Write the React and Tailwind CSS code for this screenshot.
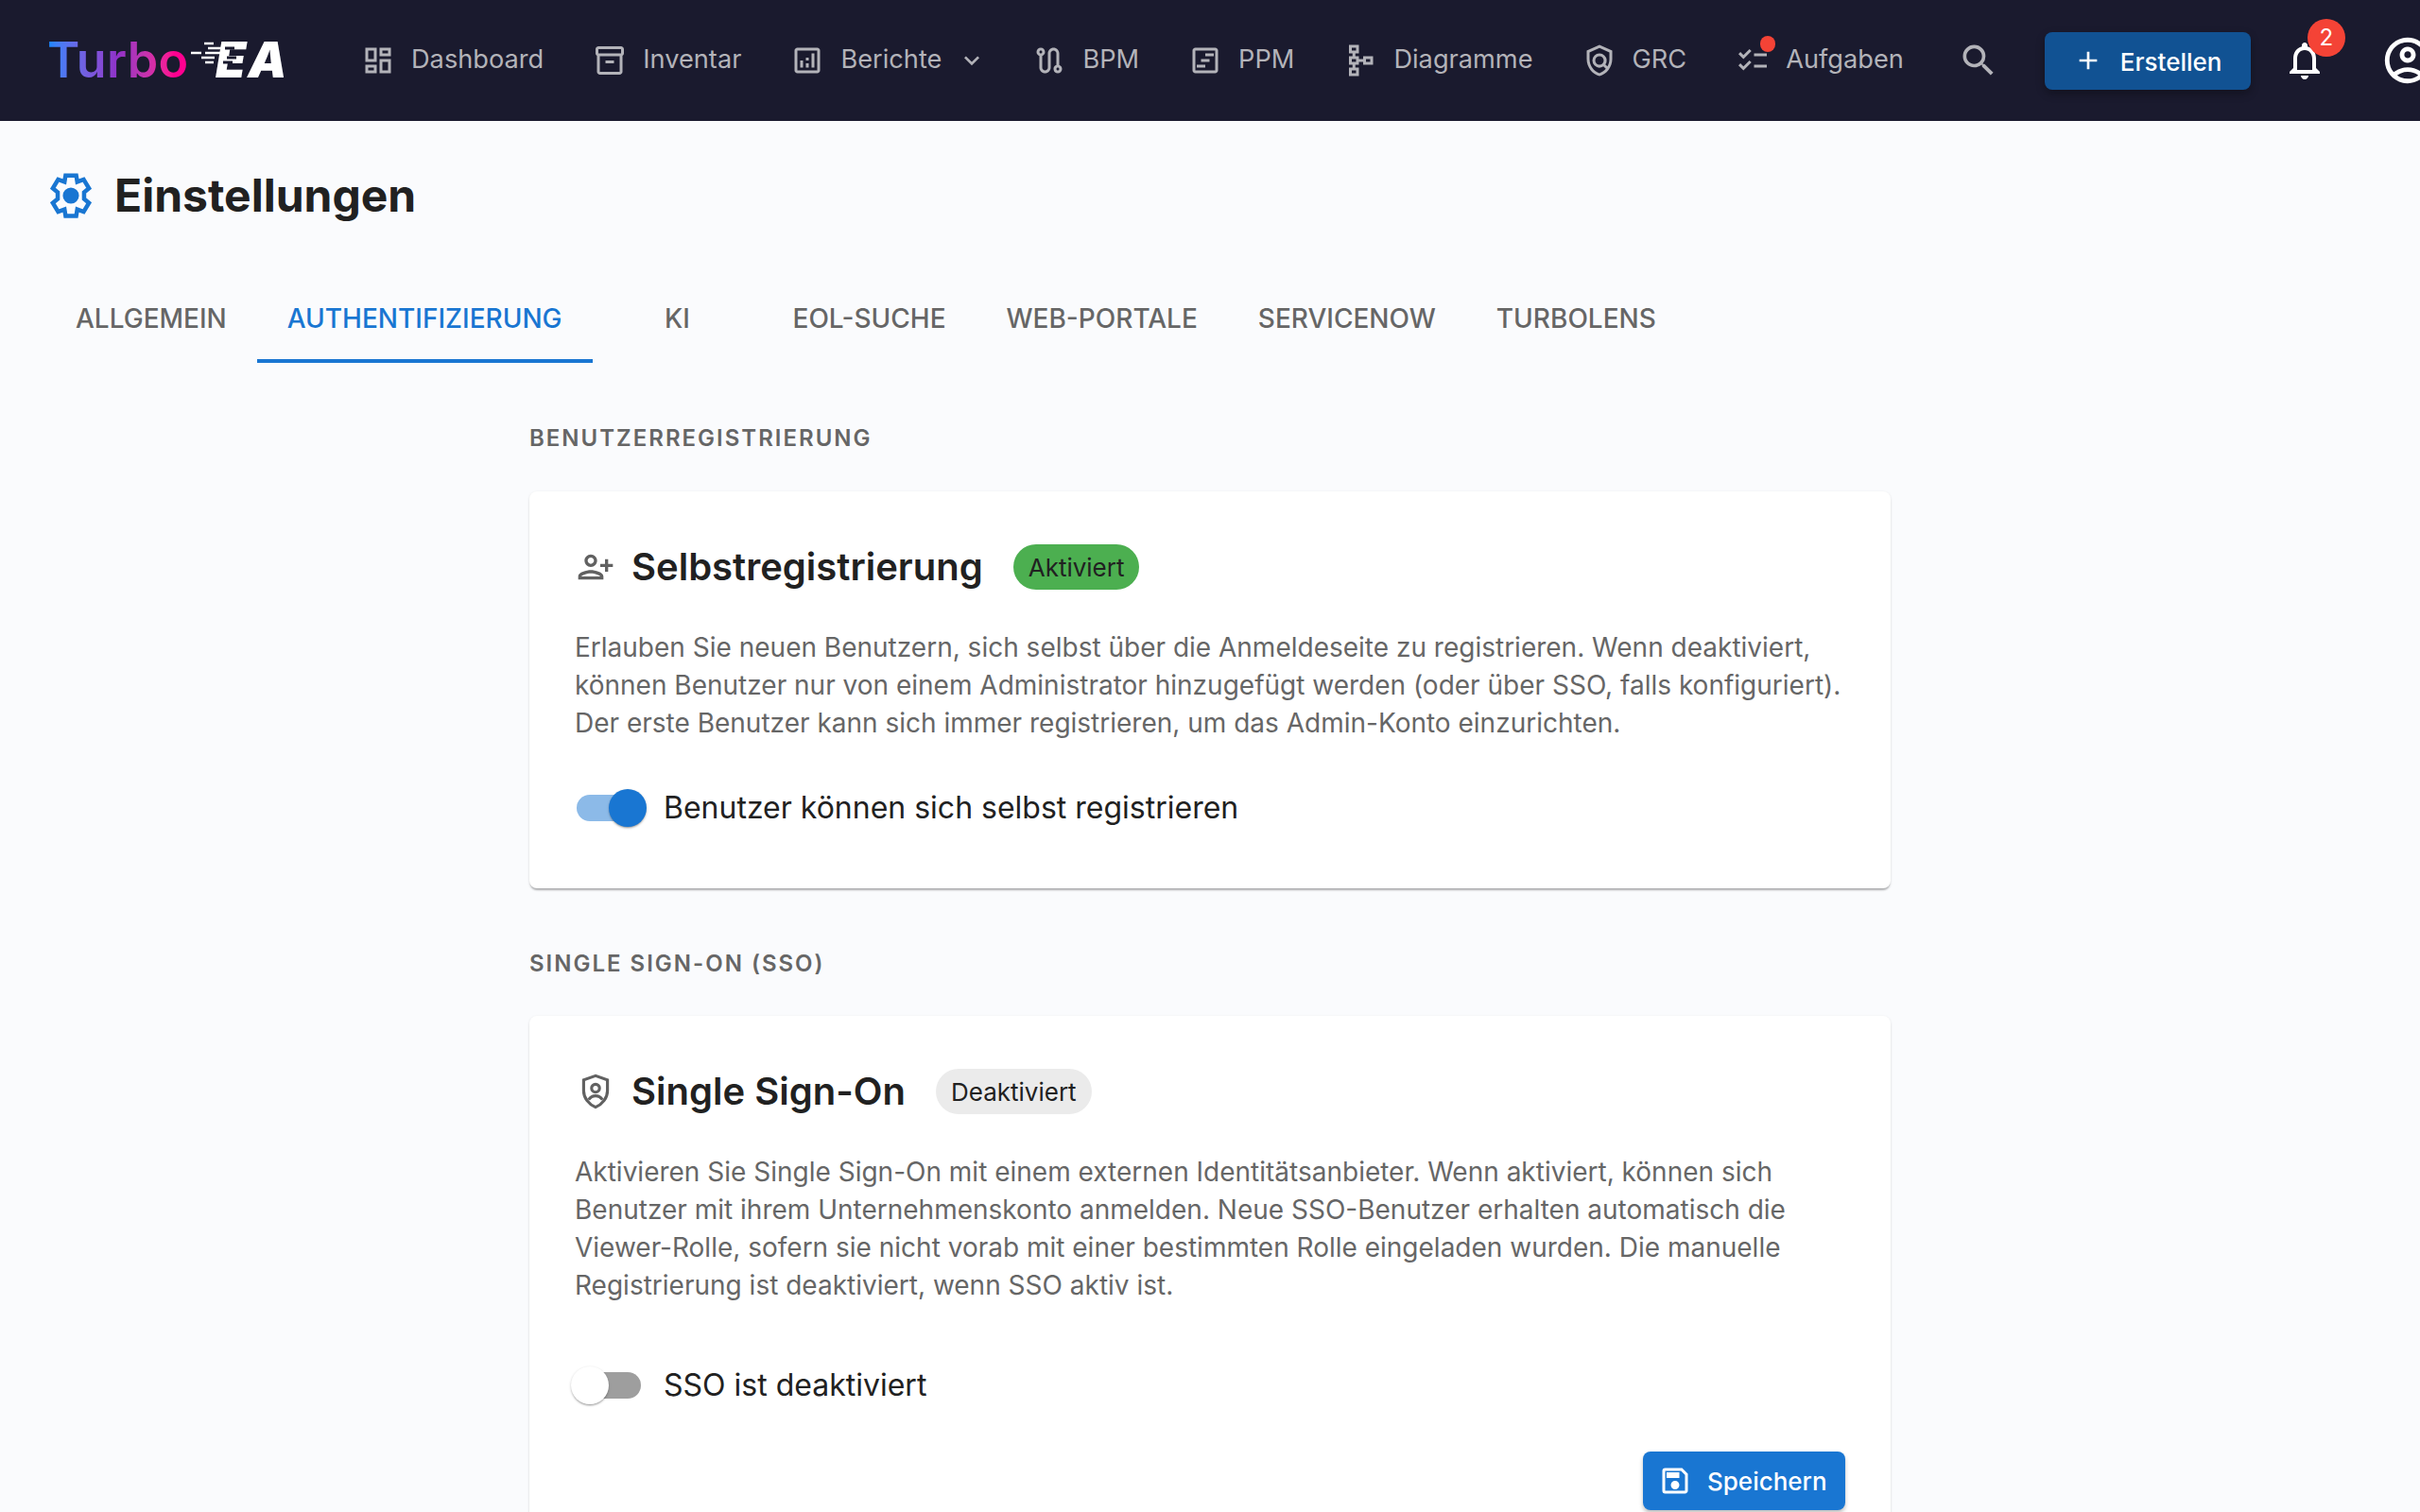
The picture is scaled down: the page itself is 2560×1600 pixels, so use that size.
import React from "react";
import {
  MdOutlineDashboard, MdOutlineInventory2, MdOutlineAnalytics, MdOutlineRoute, MdOutlineViewTimeline,
  MdOutlineSchema, MdOutlinePolicy, MdOutlineChecklist, MdSearch, MdAdd, MdNotificationsNone,
  MdOutlineAccountCircle, MdOutlinePersonAdd, MdOutlineSave, MdExpandMore,
} from "react-icons/md";

const font = { fontFamily: "Inter, 'Liberation Sans', sans-serif" };

function NavItem({ icon: Icon, label, chevron, dot }) {
  return (
    <div className="flex items-center h-[61px] text-[27.2px] text-[#b3b3b9] shrink-0">
      <span className="relative mr-[17px] flex w-[36px] justify-center">
        <Icon size={36} />
        {dot && <span className="absolute -top-[8px] right-[-6px] w-[16px] h-[17px] rounded-full bg-[#f44336]" />}
      </span>
      <span className="pb-[2px]">{label}</span>
      {chevron && <MdExpandMore size={32} className="ml-[16px] mr-[-4px]" />}
    </div>
  );
}

function Chip({ children, className }) {
  return <span className={`inline-flex items-center h-[48px] px-[16px] rounded-full text-[26px] text-[#212121] ${className}`}>{children}</span>;
}

function Switch({ on }) {
  return (
    <span className="relative block w-[68px] h-[28px] ml-[2px] shrink-0">
      <span className={`absolute inset-0 rounded-full ${on ? "bg-[#8cbae8]" : "bg-[#9e9e9e]"}`} />
      <span className={`absolute top-[-6px] w-[40px] h-[40px] rounded-full shadow-[0_2px_2px_-1px_rgba(0,0,0,0.3),0_1px_3px_rgba(0,0,0,0.2)] ${on ? "left-[34px] bg-[#1976d2]" : "left-[-6px] bg-white"}`} />
    </span>
  );
}

function Card({ icon, title, chip, children, toggle, label, footer }) {
  return (
    <div className="bg-white rounded-[8px] shadow-[0_3px_2px_-1px_rgba(0,0,0,0.25),0_1px_3px_rgba(0,0,0,0.12)] px-[48px] pt-[56px] pb-[65px]">
      <div className="flex items-center h-[48px]">
        <span className="flex w-[44px] justify-center mr-[16px] text-[#616161]">{icon}</span>
        <h2 className="text-[40px] font-semibold text-[#212121]">{title}</h2>
        <span className="ml-[32px]">{chip}</span>
      </div>
      <div className="mt-[41px] text-[28px] leading-[40px] text-[#666666]">{children}</div>
      <div className={`flex items-center ${toggle ? "mt-[50px]" : "mt-[66px]"} h-[40px]`}>
        <Switch on={toggle} />
        <span className="ml-[24px] text-[32px] text-[#212121]">{label}</span>
      </div>
      {footer}
    </div>
  );
}

export default function App() {
  return (
    <div style={font} className="h-[1600px] overflow-hidden bg-[#fafbfd]">
      <header className="h-[128px] bg-[#1a1a2e] flex items-center pl-[50px] overflow-hidden">
        <div className="relative flex items-center w-[256px] shrink-0 h-[60px]">
          <span className="text-[52px] font-semibold leading-none bg-gradient-to-r from-[#0088ff] via-[#9030c8] to-[#ff0090] to-90% bg-clip-text text-transparent tracking-[0.3px]">Turbo</span>
          <span className="absolute left-[178px] text-[52px] font-black italic text-white leading-none tracking-[2px]">EA</span>
          <svg className="absolute left-[152px] top-[10px]" width="62" height="34" viewBox="0 0 62 34" aria-hidden="true">
            <path d="M14 2h10M18 7h14M0 12h11M15 12h20M11 17h14M15 22h9" stroke="#ffffff" strokeWidth="2.5" />
            <path d="M36 7h10M38 17h10M34 22h10" stroke="#1a1a2e" strokeWidth="3" />
          </svg>
        </div>
        <div className="ml-[76px] flex items-center gap-[52px]">
          <NavItem icon={MdOutlineDashboard} label="Dashboard" />
          <NavItem icon={MdOutlineInventory2} label="Inventar" />
          <NavItem icon={MdOutlineAnalytics} label="Berichte" chevron />
          <NavItem icon={MdOutlineRoute} label="BPM" />
          <NavItem icon={MdOutlineViewTimeline} label="PPM" />
          <NavItem icon={MdOutlineSchema} label="Diagramme" />
          <NavItem icon={MdOutlinePolicy} label="GRC" />
          <NavItem icon={MdOutlineChecklist} label="Aufgaben" dot />
        </div>
        <MdSearch size={44} className="ml-[57px] text-[#b3b3b9] shrink-0" />
        <button className="ml-[48px] w-[218px] h-[61px] pl-[30px] shrink-0 rounded-[8px] bg-[#115293] text-white text-[26px] font-medium flex items-center shadow-[0_4px_10px_rgba(0,0,0,0.3)]">
          <MdAdd size={32} className="mr-[18px]" /><span className="pt-[2px]">Erstellen</span>
        </button>
        <span className="relative ml-[33px] shrink-0 text-white">
          <MdNotificationsNone size={48} />
          <span className="absolute top-[-20px] left-[27px] w-[40px] h-[40px] rounded-full bg-[#f44336] text-white text-[24px] flex items-center justify-center">2</span>
        </span>
        <MdOutlineAccountCircle size={58} className="ml-[56px] text-white shrink-0" />
      </header>

      <main className="px-[48px]">
        <div className="flex items-center h-[58px] mt-[50px]">
          <SettingsIcon />
          <h1 className="ml-[19px] text-[48px] font-bold text-[#212121]">Einstellungen</h1>
        </div>
        <div className="flex mt-[52px] h-[96px] text-[28px] font-medium text-[#666666]">
          <Tab>ALLGEMEIN</Tab>
          <Tab active>AUTHENTIFIZIERUNG</Tab>
          <Tab>KI</Tab>
          <Tab>EOL-SUCHE</Tab>
          <Tab>WEB-PORTALE</Tab>
          <Tab>SERVICENOW</Tab>
          <Tab>TURBOLENS</Tab>
        </div>
        <div className="w-[1440px] mx-auto">
          <div className="mt-[65px] h-[30px] flex items-center text-[24px] font-semibold tracking-[2px] text-[#666666]">BENUTZERREGISTRIERUNG</div>
          <div className="mt-[41px]">
            <Card
              icon={<MdOutlinePersonAdd size={40} className="-scale-x-100" />}
              title="Selbstregistrierung"
              chip={<Chip className="bg-[#4caf50]">Aktiviert</Chip>}
              toggle
              label="Benutzer können sich selbst registrieren"
            >
              Erlauben Sie neuen Benutzern, sich selbst über die Anmeldeseite zu registrieren. Wenn deaktiviert, können Benutzer nur von einem Administrator hinzugefügt werden (oder über SSO, falls konfiguriert). Der erste Benutzer kann sich immer registrieren, um das Admin-Konto einzurichten.
            </Card>
          </div>
          <div className="mt-[65px] h-[30px] flex items-center text-[24px] font-semibold tracking-[2px] text-[#666666]">SINGLE SIGN-ON (SSO)</div>
          <div className="mt-[40px]">
            <Card
              icon={<ShieldPerson />}
              title="Single Sign-On"
              chip={<Chip className="bg-[#ebebeb]">Deaktiviert</Chip>}
              toggle={false}
              label="SSO ist deaktiviert"
              footer={
                <div className="flex justify-end mt-[50px]">
                  <button className="w-[214px] h-[62px] pl-[16px] rounded-[8px] bg-[#1976d2] text-white text-[26px] font-medium flex items-center shadow-[0_3px_4px_rgba(0,0,0,0.25)]">
                    <MdOutlineSave size={36} className="mr-[16px]" />Speichern
                  </button>
                </div>
              }
            >
              Aktivieren Sie Single Sign-On mit einem externen Identitätsanbieter. Wenn aktiviert, können sich Benutzer mit ihrem Unternehmenskonto anmelden. Neue SSO-Benutzer erhalten automatisch die Viewer-Rolle, sofern sie nicht vorab mit einer bestimmten Rolle eingeladen wurden. Die manuelle Registrierung ist deaktiviert, wenn SSO aktiv ist.
            </Card>
          </div>
        </div>
      </main>
    </div>
  );
}

function Tab({ children, active }) {
  return (
    <div className={`min-w-[180px] px-[32px] pt-[6px] flex items-center justify-center border-b-[4px] ${active ? "border-[#1976d2] text-[#1976d2]" : "border-transparent"}`}>
      {children}
    </div>
  );
}

function SettingsIcon() {
  return (
    <svg width="54" height="54" viewBox="0 0 24 24" className="shrink-0" aria-hidden="true">
      <path
        fill="none"
        stroke="#1976d2"
        strokeWidth="2"
        strokeLinejoin="miter"
        d="M9.5 2.5h5l.5 3 3-1.1 2.5 4.2-2.3 1.9v3l2.3 1.9-2.5 4.2-3-1.1-.5 3h-5l-.5-3-3 1.1-2.5-4.2 2.3-1.9v-3L3.5 8.6 6 4.4l3 1.1z"
      />
      <circle cx="12" cy="12" r="3.8" fill="#1976d2" />
    </svg>
  );
}

function ShieldPerson() {
  return (
    <svg width="42" height="42" viewBox="0 0 24 24" fill="none" stroke="currentColor" strokeWidth="1.8" aria-hidden="true">
      <path d="M12 2.5 4.8 5v6.5c0 4.4 3.1 8.3 7.2 10 4.1-1.7 7.2-5.6 7.2-10V5z" />
      <circle cx="12" cy="10" r="2.4" />
      <path d="M7.8 17c1-1.5 2.5-2.4 4.2-2.4s3.2.9 4.2 2.4" />
    </svg>
  );
}
